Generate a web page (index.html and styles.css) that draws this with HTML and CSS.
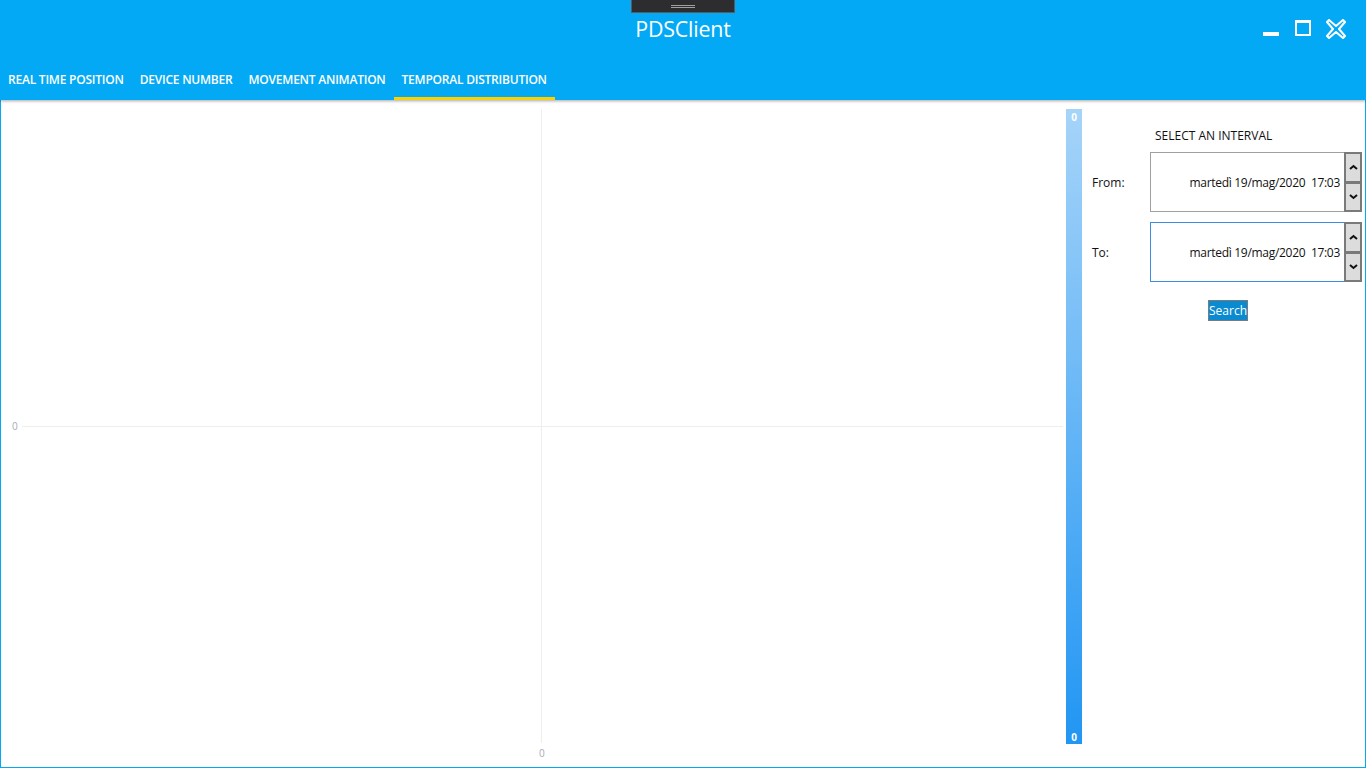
FILE: index.html
```html
<!DOCTYPE html>
<html>
<head>
<meta charset="utf-8">
<link rel="stylesheet" href="styles.css">
</head>
<body>
<div class="window">
  <header class="header">
    <div class="handle"><span></span><span></span></div>
    <div class="titlebar">
      <div></div>
      <div class="title">PDSClient</div>
      <div class="controls">
        <svg class="ctl" width="18" height="18" viewBox="0 0 18 18"><rect x="1" y="13" width="16" height="4" fill="#fff"/></svg>
        <svg class="ctl" width="18" height="18" viewBox="0 0 18 18"><rect x="2" y="2" width="14" height="14" fill="none" stroke="#fff" stroke-width="2"/><rect x="1" y="1" width="16" height="3" fill="#fff"/></svg>
        <svg class="ctl" width="20" height="20" viewBox="0 0 20 20"><path d="M3 1 L10 7 L17 1 L19 3 L13 10 L19 17 L17 19 L10 13 L3 19 L1 17 L7 10 L1 3 Z" fill="none" stroke="#fff" stroke-width="2" stroke-linejoin="round"/></svg>
      </div>
    </div>
    <nav class="tabs">
      <div class="tab">REAL TIME POSITION</div>
      <div class="tab">DEVICE NUMBER</div>
      <div class="tab">MOVEMENT ANIMATION</div>
      <div class="tab active">TEMPORAL DISTRIBUTION</div>
    </nav>
  </header>
  <main class="content">
    <div class="chart">
      <svg width="1064" height="666" viewBox="0 0 1064 666">
        <line x1="21" y1="326.5" x2="1062" y2="326.5" stroke="#eeeeee" stroke-width="1"/>
        <line x1="540.5" y1="9" x2="540.5" y2="643" stroke="#eeeeee" stroke-width="1"/>
        <text x="11" y="330" class="axis">0</text>
        <text x="538" y="657" class="axis">0</text>
      </svg>
    </div>
    <div class="colorbar">
      <span>0</span>
      <span>0</span>
    </div>
    <aside class="panel">
      <div class="panel-title">SELECT AN INTERVAL</div>
      <div class="field">
        <label>From:</label>
        <div class="picker">
          <div class="value">martedì 19/mag/2020&nbsp;&nbsp;17:03</div>
          <div class="spin">
            <div class="btn"><svg width="9" height="6" viewBox="0 0 9 6"><path d="M1 5 L4.5 2 L8 5" fill="none" stroke="#111" stroke-width="2"/></svg></div>
            <div class="btn"><svg width="9" height="6" viewBox="0 0 9 6"><path d="M1 1 L4.5 4 L8 1" fill="none" stroke="#111" stroke-width="2"/></svg></div>
          </div>
        </div>
      </div>
      <div class="field">
        <label>To:</label>
        <div class="picker focused">
          <div class="value">martedì 19/mag/2020&nbsp;&nbsp;17:03</div>
          <div class="spin">
            <div class="btn"><svg width="9" height="6" viewBox="0 0 9 6"><path d="M1 5 L4.5 2 L8 5" fill="none" stroke="#111" stroke-width="2"/></svg></div>
            <div class="btn"><svg width="9" height="6" viewBox="0 0 9 6"><path d="M1 1 L4.5 4 L8 1" fill="none" stroke="#111" stroke-width="2"/></svg></div>
          </div>
        </div>
      </div>
      <div class="actions"><button class="search">Search</button></div>
    </aside>
  </main>
</div>
</body>
</html>
```

FILE: styles.css
```css
* { box-sizing: border-box; }
html, body { margin: 0; padding: 0; width: 1366px; height: 768px; overflow: hidden; background: #fff; }
body { font-family: "Open Sans", "Noto Sans", "Liberation Sans", sans-serif; }

.window {
  width: 1366px;
  height: 768px;
  border: 1px solid #03a9f4;
  border-top: none;
  display: flex;
  flex-direction: column;
}

.header {
  position: relative;
  background: #03a9f4;
  height: 100px;
  margin: 0 -1px;
  flex: none;
  box-shadow: 0 1px 3px rgba(0,0,0,0.35);
  z-index: 2;
}

.handle {
  position: absolute;
  left: 631px;
  top: 0;
  width: 104px;
  height: 13px;
  background: #2d2d30;
  border: 1px solid #5a5a5a;
  border-top: none;
  display: flex;
  flex-direction: column;
  align-items: center;
  justify-content: center;
  gap: 1px;
}
.handle span { display: block; width: 24px; height: 1px; background: #a0a0a0; }

.titlebar {
  height: 60px;
  display: grid;
  grid-template-columns: 1fr auto 1fr;
  align-items: start;
}
.title {
  color: #fff;
  font-size: 21.4px;
  padding-top: 14px;
  line-height: 30px;
  letter-spacing: -0.2px;
}
.controls {
  display: flex;
  justify-content: flex-end;
  align-items: flex-start;
  gap: 14px;
  padding-top: 19px;
  padding-right: 20px;
}
.ctl { display: block; }

.tabs {
  display: flex;
  height: 40px;
}
.tab {
  color: #fff;
  font-size: 12px;
  font-weight: 600;
  padding: 0 8px;
  line-height: 40px;
  height: 40px;
  border-bottom: 3px solid transparent;
  letter-spacing: -0.22px;
  white-space: nowrap;
}
.tab.active { border-bottom-color: #ffd000; }

.content {
  flex: 1;
  display: flex;
  min-height: 0;
}
.chart { width: 1064px; flex: none; }
.chart svg { display: block; }
.axis { font-size: 10px; fill: #a9a9b9; font-family: "Open Sans", sans-serif; }

.colorbar {
  width: 16px;
  flex: none;
  margin: 9px 0 23px 1px;
  background: linear-gradient(to bottom, #a6d4f9, #2196f3);
  display: flex;
  flex-direction: column;
  justify-content: space-between;
  align-items: center;
  color: #fff;
  font-size: 10px;
  font-weight: 700;
  padding: 1px 0 0;
}

.panel {
  flex: 1;
  padding: 28px 3px 0 10px;
  font-size: 12px;
  color: #111;
}
.panel-title {
  padding-left: 63px;
  line-height: 16px;
  margin-bottom: 8px;
}
.field {
  display: flex;
  align-items: center;
  margin-bottom: 10px;
}
.field label { width: 58px; flex: none; }
.picker {
  display: flex;
  width: 212px;
  height: 60px;
  border: 1px solid #a0a0a0;
  border-right: none;
}
.picker.focused { border-color: #3c8de0; }
.value {
  flex: 1;
  display: flex;
  align-items: center;
  justify-content: flex-end;
  padding-right: 4px;
  white-space: nowrap;
  letter-spacing: -0.3px;
}
.spin {
  width: 18px;
  display: flex;
  flex-direction: column;
  margin: -1px 0;
}
.btn {
  flex: 1;
  background: #dcdcdc;
  border: 2px solid #7a7a7a;
  display: flex;
  align-items: center;
  justify-content: center;
}
.btn + .btn { border-top-width: 1px; }

.actions {
  padding-left: 116px;
  padding-top: 8px;
}
.search {
  font-family: inherit;
  font-size: 12px;
  color: #fff;
  background: #0a8ad0;
  border: 1px solid #7a7a7a;
  padding: 0;
  width: 40px;
  height: 21px;
  line-height: 18px;
  margin: 0;
}
```
